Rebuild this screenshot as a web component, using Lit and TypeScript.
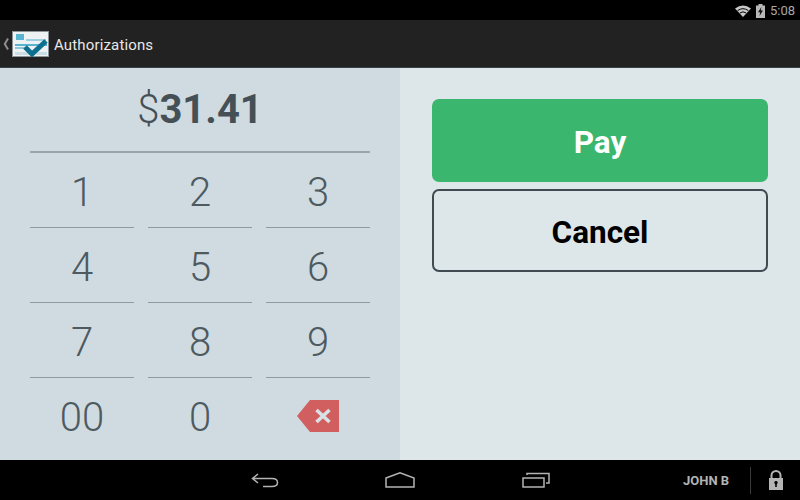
import { LitElement, html, css } from "lit";
import { customElement } from "lit/decorators.js";

const KEYS = ["1", "2", "3", "4", "5", "6", "7", "8", "9", "00", "0"];

@customElement("app-root")
export class AppRoot extends LitElement {
  static styles = css`
    :host {
      display: flex;
      flex-direction: column;
      width: 800px;
      height: 500px;
      overflow: hidden;
      font-family: Roboto, "Liberation Sans", sans-serif;
      background: #000;
    }
    .status {
      height: 20px;
      flex: none;
      box-sizing: border-box;
      padding: 1px 5px 0 0;
      background: #000;
      display: flex;
      align-items: center;
      justify-content: flex-end;
      gap: 5px;
      color: #a8a8a8;
      font-size: 13px;
    }
    .bar {
      height: 47px;
      flex: none;
      background: #222;
      border-bottom: 1px solid #3a4448;
      display: flex;
      align-items: center;
      color: #e8e8e8;
      font-size: 15px;
    }
    .bar svg { flex: none; }
    .bar .chev { margin: 0 3px 0 3px; }
    .bar .title { margin-left: 4px; padding-top: 2px; letter-spacing: 0.15px; }
    .main { flex: 1; display: flex; min-height: 0; }
    .pad {
      width: 400px;
      box-sizing: border-box;
      background: #d0dbe1;
      padding: 0 30px;
    }
    .amount {
      height: 85px;
      box-sizing: border-box;
      border-bottom: 2px solid #9aa5aa;
      display: flex;
      align-items: center;
      justify-content: center;
      font-size: 40px;
      color: #455056;
    }
    .amount .cur { font-weight: 300; }
    .amount b { font-weight: 700; }
    .keys {
      display: grid;
      grid-template-columns: repeat(3, 104px);
      grid-auto-rows: 75px;
      column-gap: 14px;
    }
    .key {
      display: flex;
      align-items: center;
      justify-content: center;
      box-sizing: border-box;
      border-bottom: 1px solid #8f9a9f;
      padding-top: 5px;
      font-size: 40px;
      font-weight: 300;
      color: #4d5a60;
    }
    .key.last { border-bottom: none; padding-top: 4px; }
    .key.icon { padding-top: 1px; }
    .actions {
      flex: 1;
      background: #dde6e9;
      padding: 31px 32px 0;
      display: flex;
      flex-direction: column;
      gap: 7px;
    }
    .btn {
      box-sizing: border-box;
      height: 83px;
      border-radius: 7px;
      padding-top: 4px;
      display: flex;
      align-items: center;
      justify-content: center;
      font-size: 31.5px;
      font-weight: 700;
    }
    .pay { background: #3bb66f; color: #fff; }
    .cancel { border: 2px solid #3f4b50; color: #000; }
    .nav {
      height: 40px;
      flex: none;
      background: #000;
      display: flex;
      align-items: center;
      color: #b4b4b4;
    }
    .nav svg { flex: none; }
    .nav .back { margin-left: 251px; }
    .nav .home { margin-left: 106px; }
    .nav .recent { margin-left: 107px; }
    .nav .user {
      margin-left: 133px;
      font-size: 13px;
      font-weight: 700;
      width: 67px;
      height: 27px;
      line-height: 27px;
      border-right: 1px solid #3a3a3a;
    }
    .nav .lock { margin-left: 17px; }
  `;

  private backspace() {
    return html`<svg width="44" height="34" viewBox="0 0 44 34">
      <path d="M1 17 L14 1 H43 V33 H14 Z" fill="#d25f60"/>
      <path d="M20.500 11 L33.500 23 M33.500 11 L20.500 23" stroke="#d8e2e6" stroke-width="3.600" fill="none"/>
    </svg>`;
  }

  render() {
    return html`
      <div class="status">
        <svg width="16" height="12" viewBox="0 0 16 12">
          <path d="M0 3.500 Q8 -2.500 16 3.500 L8 12 Z" fill="#c8c8c8"/>
          <path d="M2.600 5.600 Q8 1.800 13.400 5.600 M4.800 8 Q8 5.600 11.200 8" stroke="#000" stroke-width="1" fill="none"/>
        </svg>
        <svg width="9" height="14" viewBox="0 0 9 14">
          <path d="M2.500 0 H6.500 V1.500 H9 V14 H0 V1.500 H2.500 Z" fill="#b8b8b8"/>
          <path d="M5.400 3 L2 8.200 H4.200 L3.500 12 L7 6.500 H4.800 Z" fill="#111"/>
        </svg>
        <span>5:08</span>
      </div>
      <div class="bar">
        <svg class="chev" width="6" height="14" viewBox="0 0 6 14">
          <path d="M5 1.500 L1.800 7 L5 12.500" stroke="#8d8d8d" stroke-width="2" fill="none"/>
        </svg>
        <svg width="38" height="31" viewBox="0 0 38 31">
          <rect x="0.500" y="3.500" width="36" height="25" fill="#eef2f3" stroke="#8c9498"/>
          <rect x="4" y="6" width="8" height="6" fill="#58b4d0"/>
          <rect x="14" y="11" width="20" height="2" fill="#9ccfe0"/>
          <rect x="3" y="16" width="32" height="2" fill="#58b4d0"/>
          <rect x="3" y="19" width="14" height="2" fill="#8fc6da"/>
          <rect x="3" y="24" width="32" height="3" fill="#c8dde4"/>
          <path d="M13 19 L20 26 L34 13" stroke="#0f6f8f" stroke-width="5" fill="none"/>
        </svg>
        <span class="title">Authorizations</span>
      </div>
      <div class="main">
        <section class="pad">
          <div class="amount"><span class="cur">$</span><b>31.41</b></div>
          <div class="keys">
            ${KEYS.map(
              (k, i) => html`<div class="key ${i > 8 ? "last" : ""}">${k}</div>`
            )}
            <div class="key last icon">${this.backspace()}</div>
          </div>
        </section>
        <section class="actions">
          <div class="btn pay">Pay</div>
          <div class="btn cancel">Cancel</div>
        </section>
      </div>
      <div class="nav">
        <svg class="back" width="28" height="16" viewBox="0 0 28 16">
          <path d="M7 2 L1.500 6.500 L7 11 M2 6.500 H21 Q26.500 6.500 26.500 10.500 Q26.500 14.500 21 14.500 H12" stroke="#b4b4b4" stroke-width="1.500" fill="none"/>
        </svg>
        <svg class="home" width="30" height="16" viewBox="0 0 30 16">
          <path d="M1 6 L15 0.800 L29 6 V15 H1 Z" stroke="#b4b4b4" stroke-width="1.500" fill="none"/>
        </svg>
        <svg class="recent" width="28" height="16" viewBox="0 0 28 16">
          <path d="M1 6 H22 V15 H1 Z" stroke="#b4b4b4" stroke-width="1.500" fill="none"/>
          <path d="M5 3 V1.500 H27 V11 H24" stroke="#b4b4b4" stroke-width="1.500" fill="none"/>
        </svg>
        <span class="user">JOHN B</span>
        <svg class="lock" width="16" height="20" viewBox="0 0 16 20">
          <path d="M3.500 9 V5.500 A4.500 4.500 0 0 1 12.500 5.500 V9" stroke="#b4b4b4" stroke-width="2" fill="none"/>
          <path d="M1 8 H15 V20 H1 Z M8 11 A1.700 1.700 0 0 0 7.200 14.200 V17 H8.800 V14.200 A1.700 1.700 0 0 0 8 11 Z" fill="#b4b4b4" fill-rule="evenodd"/>
        </svg>
      </div>
    `;
  }
}
